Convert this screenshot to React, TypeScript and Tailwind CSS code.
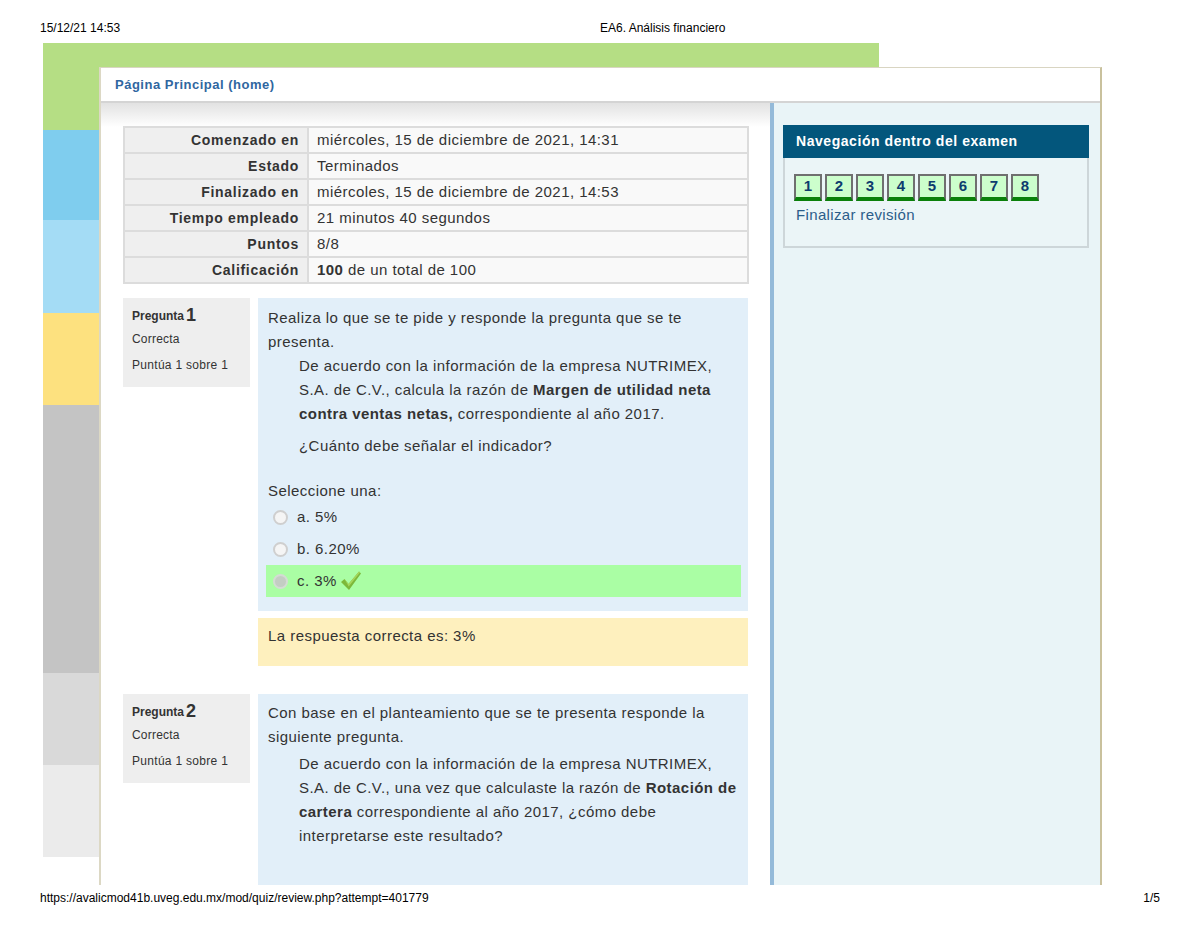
const summary = [
  { label: 'Comenzado en', value: <>miércoles, 15 de diciembre de 2021, 14:31</> },
  { label: 'Estado', value: <>Terminados</> },
  { label: 'Finalizado en', value: <>miércoles, 15 de diciembre de 2021, 14:53</> },
  { label: 'Tiempo empleado', value: <>21 minutos 40 segundos</> },
  { label: 'Puntos', value: <>8/8</> },
  {
    label: 'Calificación',
    value: (
      <>
        <b>100</b> de un total de 100
      </>
    ),
  },
]

const Check = () => (
  <svg width="22" height="22" viewBox="0 0 22 22" className="ml-[3px]">
    <path d="M1 12 L4.5 9 L8.5 14 L19 1.5 L21 3.5 L9 20 Z" fill="#7cb83a" />
    <path d="M4.5 9 L8.5 14 L19 1.5 L20 2.5 L8.7 16.5 Z" fill="#a6d65c" />
  </svg>
)

const InfoBox = ({ n }: { n: number }) => (
  <div className="h-[89px] w-[127px] shrink-0 bg-[#eeeeee] pl-[9px] pt-[8px] text-[12px] text-[#333]">
    <div className="flex h-[20px] items-end leading-[20px]">
      <span className="font-bold">Pregunta</span>
      <span className="ml-[2px] text-[18px] font-bold leading-[22px]">{n}</span>
    </div>
    <div className="leading-[26px] tracking-[0.2px]">Correcta</div>
    <div className="leading-[26px] tracking-[0.3px]">Puntúa 1 sobre 1</div>
  </div>
)

const Radio = ({ checked }: { checked?: boolean }) =>
  checked ? (
    <span className="h-[15px] w-[15px] rounded-full border-2 border-[#d4dbd4] bg-[#c3cdc3]" />
  ) : (
    <span className="h-[15px] w-[15px] rounded-full border-2 border-[#cfcfcf] bg-[#f5f5f5]" />
  )

export default function App() {
  return (
    <div className="relative h-[927px] w-[1200px] overflow-hidden bg-white font-['Liberation_Sans',Arial,sans-serif] text-[#333]">
      {/* print header */}
      <div className="flex h-[43px] pl-[40px] pt-[21px] text-[12px] leading-[14px] text-black">
        <span className="w-[560px]">15/12/21 14:53</span>
        <span>EA6. Análisis financiero</span>
      </div>

      <div className="ml-[43px] flex h-[842px]">
        {/* colour strips */}
        <div className="flex w-[56px] shrink-0 flex-col">
          <div className="h-[87px] bg-[#b5de84]" />
          <div className="h-[90px] bg-[#7fcdee]" />
          <div className="h-[93px] bg-[#a4dcf5]" />
          <div className="h-[92px] bg-[#fde17f]" />
          <div className="h-[268px] bg-[#c4c4c4]" />
          <div className="h-[92px] bg-[#d9d9d9]" />
          <div className="h-[92px] bg-[#ebebeb]" />
        </div>

        <div className="flex flex-col">
          <div className="h-[24px] w-[780px] bg-[#b5de84]" />
          <div className="flex h-[818px] w-[1003px] flex-col border-t border-l-2 border-r-2 border-t-[#d9d5c2] border-l-[#dcd8c4] border-r-[#c9c19d]">
            <div className="flex h-[35px] shrink-0 items-center border-b-2 border-[#d4d4d4] bg-white pl-[14px] text-[13px] font-bold tracking-[0.5px] text-[#2f66a0]">
              Página Principal (home)
            </div>

            <div className="flex min-h-0 flex-1 overflow-hidden">
              {/* main column */}
              <div className="w-[669px] shrink-0 bg-[linear-gradient(to_bottom,#e2e2e2,#ffffff_24px)] px-[22px] pt-[23px]">
                <div className="grid w-[626px] grid-cols-[182px_1fr] gap-[2px] bg-[#dcdcdc] p-[2px]">
                  {summary.map((r) => (
                    <div key={r.label} className="contents">
                      <div className="h-[24px] bg-[#efefef] pr-[8px] text-right text-[14px] font-bold leading-[24px] tracking-[0.7px]">
                        {r.label}
                      </div>
                      <div className="h-[24px] bg-[#f9f9f9] pl-[8px] text-[15px] leading-[24px] tracking-[0.45px]">
                        {r.value}
                      </div>
                    </div>
                  ))}
                </div>

                {/* question 1 */}
                <div className="mt-[14px] flex gap-[8px]">
                  <InfoBox n={1} />
                  <div className="flex w-[491px] flex-col">
                    <div className="h-[313px] bg-[#e2eff9] pl-[10px] pr-[5px] pt-[8px] text-[15px] leading-[24px] tracking-[0.45px]">
                      <p>Realiza lo que se te pide y responde la pregunta que se te presenta.</p>
                      <div className="ml-[31px]">
                        <p>
                          De acuerdo con la información de la empresa NUTRIMEX, S.A. de C.V., calcula la razón de{' '}
                          <b>Margen de utilidad neta contra ventas netas,</b> correspondiente al año 2017.
                        </p>
                        <p className="mt-[8px]">¿Cuánto debe señalar el indicador?</p>
                      </div>
                      <p className="mt-[21px]">Seleccione una:</p>
                      <div className="ml-[-2px] mr-[2px] mt-[-2px]">
                        <div className="flex h-[32px] items-center gap-[9px] pl-[7px]">
                          <Radio />
                          <span>a. 5%</span>
                        </div>
                        <div className="flex h-[32px] items-center gap-[9px] pl-[7px]">
                          <Radio />
                          <span>b. 6.20%</span>
                        </div>
                        <div className="flex h-[32px] items-center gap-[9px] bg-[#aafea4] pl-[7px]">
                          <Radio checked />
                          <span className="flex items-center">
                            c. 3%
                            <Check />
                          </span>
                        </div>
                      </div>
                    </div>
                    <div className="mt-[7px] h-[48px] bg-[#fef0be] px-[10px] pt-[6px] text-[15px] leading-[24px] tracking-[0.45px]">
                      La respuesta correcta es: 3%
                    </div>
                  </div>
                </div>

                {/* question 2 */}
                <div className="mt-[28px] flex gap-[8px]">
                  <InfoBox n={2} />
                  <div className="h-[200px] w-[491px] bg-[#e2eff9] pl-[10px] pr-[5px] pt-[7px] text-[15px] leading-[24px] tracking-[0.45px]">
                    <p>Con base en el planteamiento que se te presenta responde la siguiente pregunta.</p>
                    <div className="ml-[31px] mt-[3px]">
                      <p>
                        De acuerdo con la información de la empresa NUTRIMEX, S.A. de C.V., una vez que calculaste la razón de{' '}
                        <b>Rotación de cartera</b> correspondiente al año 2017, ¿cómo debe interpretarse este resultado?
                      </p>
                    </div>
                  </div>
                </div>
              </div>

              {/* side column */}
              <div className="flex-1 border-l-4 border-[#94bad9] bg-[#e9f4f7] pl-[9px] pr-[11px] pt-[22px]">
                <div className="flex h-[33px] items-center bg-[#03567c] px-[13px] text-[14px] font-bold tracking-[0.55px] text-white">
                  Navegación dentro del examen
                </div>
                <div className="h-[90px] border-2 border-t-0 border-[#cdd6d9] bg-[#ebf5f7] pl-[9px] pt-[16px]">
                  <div className="flex gap-[3px]">
                    {[1, 2, 3, 4, 5, 6, 7, 8].map((n) => (
                      <div
                        key={n}
                        className="flex h-[27px] w-[28px] items-center justify-center border-2 border-b-[4px] border-[#6f6f6f] border-b-[#0a800a] bg-[#ccfecc] text-[15px] font-bold text-[#0d3c6e]"
                      >
                        {n}
                      </div>
                    ))}
                  </div>
                  <div className="mt-[2px] pl-[2px] text-[15px] leading-[24px] tracking-[0.35px] text-[#2b5d8a]">
                    Finalizar revisión
                  </div>
                </div>
              </div>
            </div>
          </div>
        </div>
      </div>

      {/* print footer */}
      <div className="flex justify-between px-[40px] pt-[6px] text-[12px] leading-[14px] text-black">
        <span>https://avalicmod41b.uveg.edu.mx/mod/quiz/review.php?attempt=401779</span>
        <span>1/5</span>
      </div>
    </div>
  )
}
